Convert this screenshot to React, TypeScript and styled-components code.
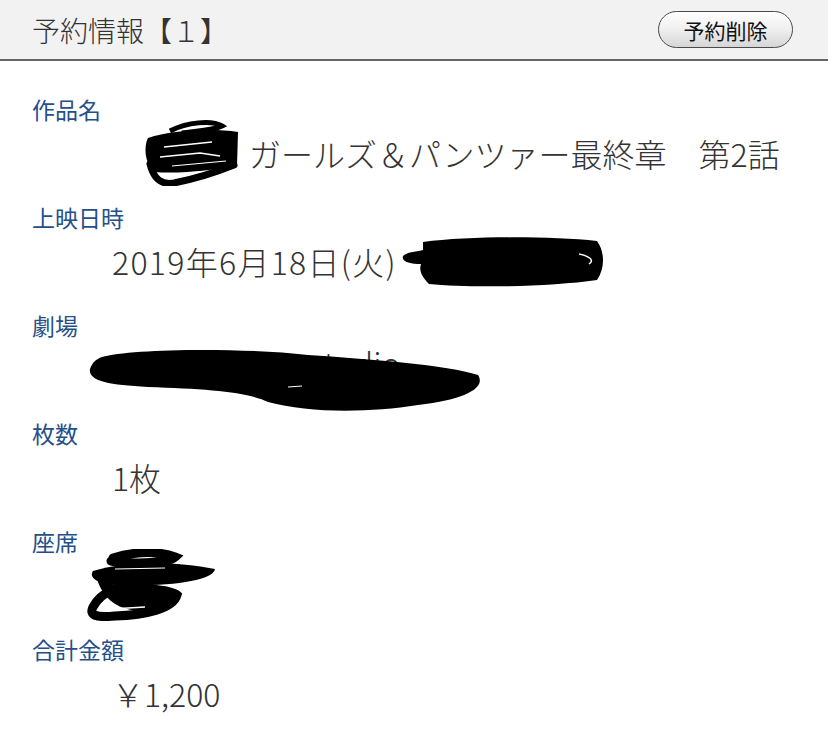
import React from 'react';
import styled, { createGlobalStyle } from 'styled-components';

const GlobalStyle = createGlobalStyle`
    body {
        margin: 0;
        background: #ffffff;
        font-family: "Noto Sans CJK JP", "Noto Sans", sans-serif;
        font-weight: 300;
    }
`;

const Page = styled.div`
    width: 828px;
    min-height: 734px;
    background: #ffffff;
`;

const Header = styled.div`
    display: flex;
    align-items: center;
    justify-content: space-between;
    height: 59px;
    padding: 0 35px 0 32px;
    background: #f2f2f2;
    border-bottom: 2px solid #666666;
`;

const Title = styled.h1`
    margin: 0;
    font-size: 28px;
    font-weight: 300;
    color: #333333;
`;

const DeleteButton = styled.button`
    width: 135px;
    height: 37px;
    padding: 0;
    border: 1.5px solid #4a4a4a;
    border-radius: 19px;
    background: linear-gradient(#fefefe, #f1f1f1 45%, #d6d6d6);
    box-shadow: inset 0 1px 0 #ffffff;
    font-family: inherit;
    font-weight: 400;
    font-size: 21px;
    color: #111111;
    cursor: pointer;
`;

const Content = styled.div`
    padding: 30px 0 0 32px;
`;

const Section = styled.section`
    margin-bottom: 20px;
`;

const Label = styled.div`
    height: 36px;
    line-height: 36px;
    font-size: 23px;
    font-weight: 400;
    color: #24508a;
`;

const Value = styled.div<{ $spaced?: boolean }>`
    position: relative;
    display: flex;
    align-items: center;
    height: 52px;
    padding-left: 80px;
    font-size: 32px;
    line-height: 52px;
    color: #333333;
    white-space: nowrap;
    letter-spacing: ${p => (p.$spaced ? '1.3px' : '0')};
`;

const Scribble = styled.svg<{ $offset?: number }>`
    flex-shrink: 0;
    margin-left: ${p => p.$offset ?? 0}px;
`;

const TitleText = styled.span`
    margin-left: 9px;
`;

const HiddenText = styled.span`
    padding-left: 198px;
    margin-top: -14px;
`;

const Redaction = styled.svg`
    position: absolute;
    left: 56px;
    top: 4px;
`;

const TitleScribble = () => (
    <Scribble $offset={30} width="98" height="66" viewBox="0 0 98 66">
        <path d="M6 18 C30 10 70 8 96 12 L95 46 C70 50 40 54 12 52 C2 42 2 26 6 18 Z" fill="#000" />
        <path d="M28 11 C45 2 70 0 80 6 C70 11 50 11 40 13" stroke="#000" strokeWidth="5" fill="none" />
        <path d="M8 44 C12 60 20 65 32 63 C52 59 72 53 92 45" stroke="#000" strokeWidth="7" fill="none" strokeLinecap="round" />
        <path d="M22 27 L70 22" stroke="#fff" strokeWidth="1.5" />
        <path d="M18 37 L58 33 L78 36" stroke="#fff" strokeWidth="1.5" fill="none" />
        <path d="M30 46 L84 41" stroke="#fff" strokeWidth="1.2" />
    </Scribble>
);

const DateScribble = () => (
    <Scribble $offset={2} width="208" height="54" viewBox="0 0 208 54">
        <path
            d="M24 8 C70 2 150 2 198 7 C206 18 206 34 198 46 C150 53 70 54 30 50 C22 42 20 36 22 30 C12 30 2 28 4 22 C8 18 16 18 24 16 Z"
            fill="#000"
        />
        <path d="M180 20 C190 22 196 26 190 30" stroke="#fff" strokeWidth="1.5" fill="none" />
    </Scribble>
);

const TheaterBlob = () => (
    <Redaction width="396" height="66" viewBox="0 0 396 66">
        <path
            d="M14 10 C40 2 150 0 220 8 C280 12 360 18 390 28 C398 40 380 52 330 58 C280 66 220 66 180 55 C160 45 120 42 60 40 C20 38 0 34 2 22 C4 16 8 12 14 10 Z"
            fill="#000"
        />
        <path d="M200 40 L214 39" stroke="#fff" strokeWidth="1" />
    </Redaction>
);

const SeatScribble = () => (
    <Scribble $offset={-27} width="134" height="72" viewBox="0 0 134 72">
        <path d="M28 9 C50 2 75 2 90 8 C82 15 40 15 26 12" stroke="#000" strokeWidth="9" fill="none" strokeLinecap="round" />
        <path d="M8 22 C40 12 90 12 130 20 C128 32 84 38 30 36 C10 34 4 28 8 22 Z" fill="#000" />
        <path d="M12 30 C30 38 60 42 92 42 C94 54 80 60 60 62 C40 62 20 56 12 30 Z" fill="#000" />
        <path
            d="M28 40 C50 38 85 40 92 46 C88 60 60 66 30 67 C10 69 4 66 8 58 C12 50 20 44 28 40"
            stroke="#000"
            strokeWidth="9"
            fill="none"
            strokeLinecap="round"
        />
        <path d="M30 20 L80 19" stroke="#fff" strokeWidth="1.2" />
        <path d="M26 60 L60 58" stroke="#fff" strokeWidth="1.5" />
    </Scribble>
);

const App = () => {
    return (
        <Page>
            <GlobalStyle />
            <Header>
                <Title>予約情報【１】</Title>
                <DeleteButton>予約削除</DeleteButton>
            </Header>
            <Content>
                <Section>
                    <Label>作品名</Label>
                    <Value>
                        <TitleScribble />
                        <TitleText>ガールズ＆パンツァー最終章　第2話</TitleText>
                    </Value>
                </Section>
                <Section>
                    <Label>上映日時</Label>
                    <Value $spaced>
                        2019年6月18日(火)
                        <DateScribble />
                    </Value>
                </Section>
                <Section>
                    <Label>劇場</Label>
                    <Value>
                        <HiddenText>studio</HiddenText>
                        <TheaterBlob />
                    </Value>
                </Section>
                <Section>
                    <Label>枚数</Label>
                    <Value>1枚</Value>
                </Section>
                <Section>
                    <Label>座席</Label>
                    <Value>
                        <SeatScribble />
                    </Value>
                </Section>
                <Section>
                    <Label>合計金額</Label>
                    <Value>￥1,200</Value>
                </Section>
            </Content>
        </Page>
    );
};

export default App;
